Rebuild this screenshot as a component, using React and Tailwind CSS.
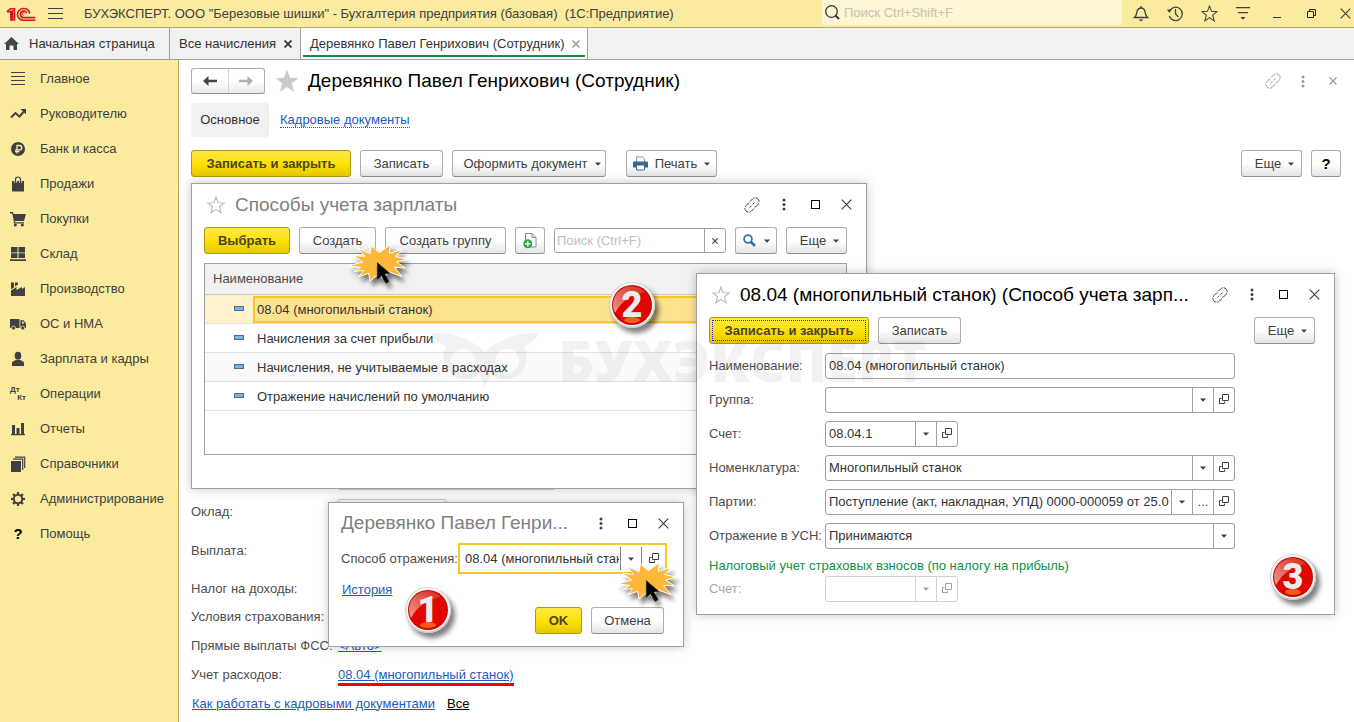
import { clsx } from 'clsx';

const SIDEBAR_ITEMS = [
  { icon: 'menu', label: 'Главное' },
  { icon: 'trend', label: 'Руководителю' },
  { icon: 'ruble', label: 'Банк и касса' },
  { icon: 'bag', label: 'Продажи' },
  { icon: 'cart', label: 'Покупки' },
  { icon: 'boxes', label: 'Склад' },
  { icon: 'factory', label: 'Производство' },
  { icon: 'truck', label: 'ОС и НМА' },
  { icon: 'person', label: 'Зарплата и кадры' },
  { icon: 'dtkt', label: 'Операции' },
  { icon: 'chart', label: 'Отчеты' },
  { icon: 'books', label: 'Справочники' },
  { icon: 'gear', label: 'Администрирование' },
  { icon: 'help', label: 'Помощь' },
];

const METHODS = [
  '08.04 (многопильный станок)',
  'Начисления за счет прибыли',
  'Начисления, не учитываемые в расходах',
  'Отражение начислений по умолчанию',
];

const GEAR_TEETH = [0, 45, 90, 135, 180, 225, 270, 315];

/* Solid 16x16 section icons */
function SectionIcon({ name }) {
  if (name === 'dtkt') {
    return (
      <span aria-hidden="true" className="flex w-4 flex-col text-[8px] leading-[8px] font-bold">
        <span>Дт</span>
        <span className="self-end">Кт</span>
      </span>
    );
  }
  if (name === 'help') {
    return <span aria-hidden="true" className="w-4 text-center text-[15px] font-bold text-black">?</span>;
  }
  return (
    <svg width="16" height="16" viewBox="0 0 16 16" fill="currentColor" aria-hidden="true" className="shrink-0">
      {name === 'menu' && <path d="M1 1h14v1H1zM1 5h14v1H1zM1 9h14v1H1zM1 13h14v1H1z" />}
      {name === 'trend' && (
        <path d="M1 11.5l4.5-4.5 4 3.5 4-4.5" fill="none" stroke="currentColor" strokeWidth="2" />
      )}
      {name === 'trend' && <path d="M10.500 3H16v5.500z" />}
      {name === 'ruble' && (
        <>
          <circle cx="8" cy="8" r="7" />
          <path d="M7 12.500V4.500h2.500a2.200 2.200 0 010 4.400H5M5 10.700h4.500" fill="none" stroke="#faeb9e" strokeWidth="1.300" />
        </>
      )}
      {name === 'bag' && (
        <>
          <path d="M2 5h12v10.500H2z" />
          <path d="M5.500 7V4a2.500 2.500 0 015 0v3" fill="none" stroke="#faeb9e" strokeWidth="2.600" />
          <path d="M5.500 7.500V3.500a2.500 2.500 0 015 0v4" fill="none" stroke="currentColor" strokeWidth="1.200" />
        </>
      )}
      {name === 'cart' && (
        <>
          <path d="M0 1h3l.6 2H16l-2 7H5v1.200h9V12.500H3.800V10L2.200 2.400H0z" />
          <circle cx="5.300" cy="14" r="1.500" />
          <circle cx="12.300" cy="14" r="1.500" />
        </>
      )}
      {name === 'boxes' && <path d="M1 1h6.500v5.500H1zM8.500 1H15v5.500H8.500zM1 7.300h6.500V12H1zM8.500 7.300H15V12H8.500zM0 13.300h16V15H0z" />}
      {name === 'factory' && <path d="M1 15V9.500L6.500 6v3L12 6v2l3-2v9zM1 8.300V1.500h3V6.500zM5 5.500v-4h3v2z" />}
      {name === 'truck' && (
        <>
          <path d="M0 3h9.500v9H0z" />
          <path d="M10.300 4.300h3.200L16 7.500V12h-5.700z" />
          <path d="M12 5.500h1.200L14.500 7.500H12z" fill="#faeb9e" />
          <circle cx="3.500" cy="12" r="2" stroke="#faeb9e" strokeWidth=".8" />
          <circle cx="12.800" cy="12" r="2" stroke="#faeb9e" strokeWidth=".8" />
        </>
      )}
      {name === 'person' && (
        <>
          <ellipse cx="8" cy="4.800" rx="3.300" ry="4" />
          <path d="M2 15v-3c0-1.500 2-2.500 4.300-3h3.400c2.300.5 4.300 1.500 4.300 3v3z" />
        </>
      )}
      {name === 'chart' && <path d="M2 4h3v9H2zM6.500 7h3v6h-3zM11 2h3v11h-3zM1 13h14v1.200H1z" />}
      {name === 'books' && (
        <>
          <path d="M1 5h10v11H1z" />
          <path d="M3 3.200h9.700V14M5 1.200h9.700V12" fill="none" stroke="currentColor" strokeWidth="1.200" />
        </>
      )}
      {name === 'gear' && (
        <>
          <circle cx="8" cy="8" r="4.200" fill="none" stroke="currentColor" strokeWidth="2" />
          {GEAR_TEETH.map((angle) => (
            <rect key={angle} x="6.900" y="1" width="2.200" height="2.800" transform={`rotate(${angle} 8 8)`} />
          ))}
        </>
      )}
    </svg>
  );
}

function Logo() {
  return (
    <svg width="30" height="16" viewBox="18 12 92 48" fill="none" stroke="#d8141f" strokeWidth="5" aria-label="1С">
      <path d="M21 29l11-9h12v37M21 29h12v28M38 24v33" />
      <path d="M91 34a19 18 0 10-19 21h36" />
      <path d="M82 34a10 10 0 10-9 13h35" />
      <path d="M75 34a4 4 0 10-3 6" strokeWidth="3" />
    </svg>
  );
}

function Star({ size = 18, solid = false, className }) {
  return (
    <svg width={size} height={size} viewBox="0 0 18 18" aria-hidden="true" className={className}>
      <path
        d="M9 1l2.100 5.700 6 .3-4.700 3.700L14 16.800 9 13.400l-5 3.400 1.600-6.100L.9 7l6-.3z"
        fill={solid ? 'currentColor' : 'none'}
        stroke="currentColor"
        strokeWidth={solid ? 0.4 : 1.1}
      />
    </svg>
  );
}

function LinkIcon() {
  return (
    <svg width="16" height="16" viewBox="0 0 16 16" fill="none" stroke="currentColor" aria-hidden="true">
      <path d="M6 4.500L8.500 2C10 .5 12.500.3 14 1.900s1.400 4 0 5.400L11.500 10H9.500" strokeDasharray="6 1" />
      <path d="M10 11.500L7.500 14c-1.500 1.500-4 1.700-5.500.1s-1.400-4 0-5.400L4.500 6h2" strokeDasharray="6 1" />
      <path d="M5.500 10.500l1.800-1.800M8.700 7.300l1.800-1.800" />
    </svg>
  );
}

function DotsIcon() {
  return (
    <svg width="4" height="13" viewBox="0 0 4 13" fill="currentColor" aria-hidden="true">
      <circle cx="2" cy="2" r="1.500" />
      <circle cx="2" cy="6.500" r="1.500" />
      <circle cx="2" cy="11" r="1.500" />
    </svg>
  );
}

function CrossIcon({ size = 11, width = 1.2 }) {
  return (
    <svg width={size} height={size} viewBox="0 0 11 11" stroke="currentColor" strokeWidth={width} aria-hidden="true">
      <path d="M.7.7l9.600 9.600M10.300.7L.7 10.300" />
    </svg>
  );
}

function Caret() {
  return (
    <svg width="6" height="4" viewBox="0 0 6 4" fill="currentColor" aria-hidden="true" className="shrink-0">
      <path d="M0 .5h6L3 3.800z" />
    </svg>
  );
}

function OpenIcon() {
  return (
    <svg width="10" height="10" viewBox="0 0 10 10" fill="none" stroke="currentColor" aria-hidden="true" className="mb-[2px] shrink-0">
      <path d="M3.500.5h6v6h-6zM2.500 4.500h-2v5h5v-2" />
    </svg>
  );
}

function Button({ primary, className, children, ...props }) {
  return (
    <button
      type="button"
      className={clsx(
        'flex h-[27px] shrink-0 items-center justify-center rounded-[3px] border bg-linear-to-b',
        primary
          ? 'border-[#a99a12] from-[#ffe940] via-[#ffe100] to-[#e6c900] font-bold text-[#4a4528]'
          : 'border-[#adadad] border-b-[#8f8f8f] from-white via-white to-[#e4e4e4] text-[#404040]',
        className
      )}
      {...props}
    >
      {children}
    </button>
  );
}

/* Text field with a row of small buttons at its right end */
function Field({ id, label, value = '', actions = [], disabled, className }) {
  const icons = { list: <Caret />, open: <OpenIcon />, more: '...' };
  const names = { list: 'Выбрать из списка', open: 'Открыть', more: 'Показать все' };
  return (
    <div className={clsx('flex h-[26px] rounded-[3px] border bg-white', disabled ? 'border-[#d0d0d0] text-[#a0a0a0]' : 'border-[#a0a0a0] text-[#404040]', className)}>
      <input id={id} aria-label={label} defaultValue={value} disabled={disabled} className="mr-[2px] min-w-0 flex-1 pl-[3px] text-[#333] outline-none" />
      {actions.map((action) => (
        <button
          key={action}
          type="button"
          aria-label={names[action]}
          disabled={disabled}
          className={clsx('flex w-[21px] items-center justify-center border-l', disabled ? 'border-[#d0d0d0]' : 'border-[#a0a0a0]')}
        >
          {icons[action]}
        </button>
      ))}
    </div>
  );
}

function WindowControls({ link }) {
  return (
    <div className="flex shrink-0 items-center text-[#404040]">
      {link && <button type="button" aria-label="Ссылка" className="flex w-8 justify-center"><LinkIcon /></button>}
      <button type="button" aria-label="Меню" className="flex w-8 justify-center"><DotsIcon /></button>
      <button type="button" aria-label="Развернуть" className="flex w-[31px] justify-center">
        <span className="size-[9px] border border-black" />
      </button>
      <button type="button" aria-label="Закрыть" className="flex w-[31px] justify-center"><CrossIcon /></button>
    </div>
  );
}

/* Glossy numbered marker */
function Badge({ number, className }) {
  return (
    <div className={clsx('absolute z-30 grid size-[46px] place-items-center rounded-full shadow-[4px_5px_5px_rgba(0,0,0,0.5)]', className)}>
      <svg width="46" height="46" viewBox="0 0 46 46" aria-hidden="true" className="col-start-1 row-start-1">
        <defs>
          <linearGradient id={`gloss-${number}`} x1="0" y1="1" x2="1" y2="0">
            <stop offset="0" stopColor="#f0978a" />
            <stop offset="1" stopColor="#d8281c" />
          </linearGradient>
        </defs>
        <circle cx="23" cy="23" r="23" fill="#c9c9c9" />
        <circle cx="23" cy="22.500" r="22" fill="#f4f4f4" />
        <circle cx="23" cy="23" r="20" fill="#b80d08" />
        <circle cx="23" cy="23" r="19" fill="#e00500" />
        <path d="M6 31A18.500 18.500 0 0136 10C24 12 13 18 6 31z" fill={`url(#gloss-${number})`} />
        <ellipse cx="23" cy="38" rx="8" ry="3" fill="#ff5a1e" />
      </svg>
      <span className="col-start-1 row-start-1 font-[Roboto,sans-serif] text-[36px] leading-[44px] font-black text-[#ececec]">{number}</span>
    </div>
  );
}

function ClickBurst({ className }) {
  return (
    <svg width="62" height="48" viewBox="0 0 186 144" aria-hidden="true" className={clsx('pointer-events-none absolute z-20 drop-shadow-[3px_5px_2px_rgba(0,0,0,0.5)]', className)}>
      <path
        d="M2 72L44 60 16 40 50 43 30 19 66 35 70 11 94 32 127 8 124 34 164 22 142 43 178 52 146 60 172 78 140 76 162 104 124 90 104 110 92 96 66 117 62 94 32 104 46 86 18 88 38 76Z"
        fill="#fdb839"
        stroke="#fff"
        strokeWidth="3"
      />
      <path d="M88 62v50l12-11 14 23 9-5-13-23 15-2z" fill="#000" stroke="#222" strokeWidth="2" />
    </svg>
  );
}

function TopBar() {
  return (
    <header className="flex h-7 items-center border-b border-[#b9aa58] bg-[#faeb9e] text-[#404040]">
      <div className="flex w-12 pl-[6px]"><Logo /></div>
      <button type="button" aria-label="Главное меню" className="flex h-[11px] w-[15px] flex-col justify-between">
        <span className="h-px w-full bg-[#404040]" />
        <span className="h-px w-full bg-[#404040]" />
        <span className="h-px w-full bg-[#404040]" />
      </button>
      <h1 className="ml-[21px] flex-1 truncate whitespace-pre">БУХЭКСПЕРТ. ООО "Березовые шишки" - Бухгалтерия предприятия (базовая)  (1С:Предприятие)</h1>
      <label className="flex h-[25px] w-[300px] shrink-0 items-center self-start rounded-b-[3px] bg-[#fdf5d3] pl-[3px]">
        <svg width="15" height="15" viewBox="0 0 15 15" fill="none" stroke="#333" aria-hidden="true">
          <circle cx="6.500" cy="6.500" r="5.800" strokeWidth="1.300" />
          <path d="M10.500 10.500l3.500 3.500" strokeWidth="2" />
        </svg>
        <input aria-label="Поиск" placeholder="Поиск Ctrl+Shift+F" className="ml-1 min-w-0 flex-1 outline-none placeholder:text-[#c6c2b8]" />
      </label>
      <div className="ml-[2px] flex shrink-0 items-center">
        <button type="button" aria-label="Уведомления" className="flex w-[34px] justify-center">
          <svg width="16" height="17" viewBox="0 0 16 17" fill="none" stroke="currentColor" strokeWidth="1.300">
            <path d="M1.500 12.500C4 10.500 3.500 8 4.300 5.500 5 3.500 6.300 3 8 3s3 .5 3.700 2.500c.8 2.500.3 5 2.800 7zM8 3V1" />
            <path d="M5.500 14.500h5L8 16.500z" fill="currentColor" stroke="none" />
          </svg>
        </button>
        <button type="button" aria-label="История" className="flex w-[34px] justify-center">
          <svg width="17" height="17" viewBox="0 0 17 17" fill="none" stroke="currentColor" strokeWidth="1.300">
            <path d="M2.500 6A6.700 6.700 0 112.200 11M8.500 4v5l3 3" />
            <path d="M0 4.500h5L2.300 8z" fill="currentColor" stroke="none" />
          </svg>
        </button>
        <button type="button" aria-label="Избранное" className="flex w-[34px] justify-center"><Star size={17} /></button>
        <button type="button" aria-label="Настройки" className="flex w-[34px] justify-center">
          <svg width="14" height="13" viewBox="0 0 14 13" fill="currentColor">
            <path d="M0 0h14v1.300H0zM2 5h10v1.300H2zM4.500 10h5L7 12.700z" />
          </svg>
        </button>
        <button type="button" aria-label="Свернуть" className="flex w-[34px] justify-center">
          <span className="mt-2 h-px w-2 bg-[#333]" />
        </button>
        <button type="button" aria-label="Восстановить" className="flex w-[34px] justify-center">
          <svg width="9" height="9" viewBox="0 0 9 9" fill="none" stroke="#222">
            <path d="M.5 2.500h6v6h-6zM2.500 2.500v-2h6v6h-2" />
          </svg>
        </button>
        <button type="button" aria-label="Закрыть" className="flex w-[26px] justify-center pl-2"><CrossIcon /></button>
      </div>
    </header>
  );
}

function TabBar() {
  return (
    <nav className="flex h-8 border-b border-[#a0a0a0] bg-[#f1f1f1] text-[#333]">
      <a href="#home" className="flex w-[170px] items-center gap-[10px] border-r border-[#a0a0a0] pl-1">
        <svg width="15" height="13" viewBox="0 0 15 13" fill="#444" aria-hidden="true">
          <path d="M7.500 0L15 7h-2v6H9.500V8.500h-4V13H2V7H0z" />
        </svg>
        Начальная страница
      </a>
      <div className="flex w-[131px] items-center justify-between border-r border-[#a0a0a0] pr-2 pl-[9px]">
        <a href="#accruals">Все начисления</a>
        <button type="button" aria-label="Закрыть вкладку" className="text-[#333]"><CrossIcon size={8} width={2.4} /></button>
      </div>
      <div className="flex w-[287px] border-r border-[#a0a0a0] bg-white px-[2px]">
        <div className="mb-[2px] flex flex-1 items-center justify-between border-b-2 border-[#109048] pt-1 pr-[5px] pl-[7px]">
          <a href="#employee" className="whitespace-nowrap">Деревянко Павел Генрихович (Сотрудник)</a>
          <button type="button" aria-label="Закрыть вкладку" className="text-[#888]"><CrossIcon size={8} width={1.6} /></button>
        </div>
      </div>
    </nav>
  );
}

function Sidebar() {
  return (
    <aside className="w-[179px] shrink-0 border-r border-[#b9aa58] bg-[#faeb9e] pt-px">
      {SIDEBAR_ITEMS.map((item) => (
        <a key={item.label} href={`#${item.icon}`} className="flex h-[35px] items-center gap-[14px] pl-[10px] text-[#404040]">
          <SectionIcon name={item.icon} />
          {item.label}
        </a>
      ))}
    </aside>
  );
}

function EmployeeForm() {
  return (
    <section className="pr-[13px] pl-3">
      <div className="flex items-center pt-2">
        <div className="flex h-[26px] w-[74px] rounded-[3px] border border-[#adadad] border-b-[#8f8f8f] bg-linear-to-b from-white via-white to-[#e8e8e8]">
          <button type="button" aria-label="Назад" className="flex flex-1 items-center justify-center border-r border-[#d0d0d0] text-[#444]">
            <svg width="14" height="10" viewBox="0 0 14 10" fill="currentColor"><path d="M0 5l5.500-5v3.800H14v2.400H5.500V10z" /></svg>
          </button>
          <button type="button" aria-label="Вперед" className="flex flex-1 items-center justify-center text-[#b0b0b0]">
            <svg width="14" height="10" viewBox="0 0 14 10" fill="currentColor"><path d="M14 5L8.500 0v3.800H0v2.400h8.500V10z" /></svg>
          </button>
        </div>
        <Star size={24} solid className="ml-[10px] text-[#cbcbcb]" />
        <h2 className="ml-[9px] flex-1 text-[19px] leading-[26px] text-black">Деревянко Павел Генрихович (Сотрудник)</h2>
        <div className="-mr-[7px] flex items-center text-[#999]">
          <button type="button" aria-label="Ссылка" className="flex w-[30px] justify-center"><LinkIcon /></button>
          <button type="button" aria-label="Меню" className="flex w-[30px] justify-center"><DotsIcon /></button>
          <button type="button" aria-label="Закрыть" className="flex w-[30px] justify-center"><CrossIcon size={8} width={1.5} /></button>
        </div>
      </div>

      <nav className="mt-[9px] flex h-[34px] items-center">
        <a href="#main" className="flex h-full w-[78px] items-center justify-center rounded-[4px] bg-[#f1f1f1] text-[#333]">Основное</a>
        <a href="#hr" className="ml-[11px] border-b border-dotted border-[#2459bf] leading-[14px] text-[#2459bf]">Кадровые документы</a>
      </nav>

      <div className="mt-[13px] flex items-center">
        <Button primary className="w-[160px]">Записать и закрыть</Button>
        <Button className="ml-[9px] w-[83px]">Записать</Button>
        <Button className="ml-[9px] w-[154px] gap-[7px] pl-[6px]">Оформить документ <Caret /></Button>
        <Button className="ml-5 w-[91px] gap-[7px]">
          <svg width="15" height="15" viewBox="0 0 15 15" aria-hidden="true">
            <path d="M3.500 6V1h6l2 2v3" fill="#fff" stroke="#7d97b0" />
            <path d="M1 5.500h13q1 0 1 1v5h-3V9H3v2.500H0v-5q0-1 1-1z" fill="#3c6690" />
            <path d="M3.500 9h8v5h-8z" fill="#fff" stroke="#3c6690" />
          </svg>
          Печать <Caret />
        </Button>
        <Button className="ml-auto w-[61px] gap-[7px] pl-[6px]">Еще <Caret /></Button>
        <Button className="ml-[9px] w-[30px] text-[15px] font-bold text-black">?</Button>
      </div>

      <div className="mt-[287px] text-[#4d4d4d]">
        <div className="flex h-[35px] items-start pl-[146px]">
          <input aria-label="Назначение" className="h-[26px] w-[219px] rounded-[3px] border border-[#d0d0d0]" />
        </div>
        <div className="flex h-[26px] items-center">
          <label htmlFor="salary" className="w-[146px]">Оклад:</label>
          <input id="salary" className="h-[26px] w-[110px] rounded-[3px] border border-[#d0d0d0]" />
        </div>
        <div className="flex h-[51px] items-center">Выплата:</div>
        <div className="flex h-[26px] items-center">Налог на доходы:</div>
        <div className="flex h-[29px] items-center">Условия страхования:</div>
        <div className="flex h-[29px] items-center">
          <span className="w-[147px]">Прямые выплаты ФСС:</span>
          <a href="#fss" className="text-[#2459bf] underline">&lt;Авто&gt;</a>
        </div>
        <div className="flex h-[29px] items-center">
          <span className="w-[147px]">Учет расходов:</span>
          <a href="#costs" className="relative text-[#2459bf] underline">
            08.04 (многопильный станок)
            <span className="absolute inset-x-0 top-full h-[3px] bg-[#f00010]" />
          </a>
        </div>
        <div className="flex h-[29px] items-center gap-3 pl-px">
          <a href="#howto" className="text-[#2459bf] underline">Как работать с кадровыми документами</a>
          <a href="#all" className="text-black underline">Все</a>
        </div>
      </div>
    </section>
  );
}

function MethodListWindow() {
  return (
    <section className="absolute top-[123px] left-3 w-[676px] border border-[#a0a0a0] bg-white px-3 pb-[33px] shadow-[0_0_10px_rgba(0,0,0,0.22)]">
      <div className="mb-[2px] flex h-[41px] items-center">
        <Star className="ml-[3px] text-[#b5b9be]" />
        <h2 className="ml-[10px] flex-1 text-[19px] leading-6 text-[#808080]">Способы учета зарплаты</h2>
        <div className="-mr-2"><WindowControls link /></div>
      </div>
      <div className="flex items-center pr-[7px]">
        <Button primary className="w-[86px]">Выбрать</Button>
        <Button className="ml-[9px] w-[77px]">Создать</Button>
        <Button className="ml-[9px] w-[121px]">Создать группу</Button>
        <Button className="ml-[9px] w-[30px]" aria-label="Скопировать">
          <svg width="14" height="16" viewBox="0 0 14 16" aria-hidden="true">
            <path d="M2.500.5h6.500l4 4v9.500H2.500z" fill="#fff" stroke="#7d8b9b" />
            <path d="M9 .5v4h4" fill="none" stroke="#7d8b9b" />
            <circle cx="4.800" cy="10.700" r="4.500" fill="#2fa147" />
            <path d="M4.800 8v5.400M2.100 10.700h5.400" stroke="#fff" strokeWidth="1.400" />
          </svg>
        </Button>
        <div className="ml-[9px] flex h-[25px] min-w-0 flex-1 rounded-[3px] border border-[#a0a0a0]">
          <input aria-label="Поиск" placeholder="Поиск (Ctrl+F)" className="min-w-0 flex-1 pl-[2px] outline-none placeholder:text-[#bdbdbd]" />
          <button type="button" aria-label="Очистить" className="flex w-[21px] items-center justify-center border-l border-[#a0a0a0] text-[#404040]">
            <CrossIcon size={6} width={2} />
          </button>
        </div>
        <Button className="ml-[9px] w-[42px] gap-[8px]" aria-label="Найти">
          <svg width="13" height="13" viewBox="0 0 13 13" fill="none" stroke="#2f75ad" aria-hidden="true">
            <circle cx="5" cy="5" r="3.900" strokeWidth="1.800" />
            <path d="M8 8l4 4" strokeWidth="2.600" />
          </svg>
          <Caret />
        </Button>
        <Button className="ml-[9px] w-[61px] gap-[7px] pl-[6px]">Еще <Caret /></Button>
      </div>

      <div className="mt-[9px] mr-[7px] h-[192px] border border-[#a0a0a0]">
        <table className="w-full border-separate border-spacing-0 text-left text-[#333]">
          <thead>
            <tr className="h-[31px] bg-[#f1f1f1] text-[#4d4d4d]">
              <th colSpan={2} className="border-b border-[#c8c8c8] p-0 pl-2 font-normal">Наименование</th>
            </tr>
          </thead>
          <tbody>
            {METHODS.map((method, i) => (
              <tr key={method} className={clsx('h-[29px]', i === 0 && 'bg-[#fef2cd]', i === 2 && 'bg-[#fafafa]')}>
                <td className="w-12 border-b border-[#e2e2e2] p-0 pl-[29px]">
                  <span className="mb-[2px] block h-[5px] w-[10px] border border-[#4a708f] bg-[#7fb3dc]" />
                </td>
                <td className="border-b border-[#e2e2e2] p-0">
                  <div className={clsx('flex h-[27px] items-center border-2 pt-[2px] pl-[2px]', i === 0 ? 'border-[#f9c923] bg-[#fee38f]' : 'border-transparent')}>
                    {method}
                  </div>
                </td>
              </tr>
            ))}
          </tbody>
        </table>
      </div>
      <ClickBurst className="top-[58px] left-[156px]" />
      <Badge number={2} className="top-[98px] left-[417px]" />
    </section>
  );
}

function ReflectionWindow() {
  return (
    <section className="absolute top-[442px] left-[149px] w-[356px] border border-[#a0a0a0] bg-white pr-4 pb-3 pl-3 shadow-[0_0_10px_rgba(0,0,0,0.22)]">
      <div className="flex h-10 items-center">
        <h2 className="flex-1 text-[19px] leading-6 whitespace-nowrap text-[#808080]">Деревянко Павел Генри...</h2>
        <div className="-mr-3"><WindowControls /></div>
      </div>
      <div className="flex items-center">
        <label htmlFor="method" className="w-[117px] shrink-0 whitespace-nowrap text-[#4d4d4d]">Способ отражения:</label>
        <div className="flex h-[31px] min-w-0 flex-1 border-2 border-[#f9c923] py-[2px] text-[#404040]">
          <input id="method" defaultValue="08.04 (многопильный станок)" className="mr-px ml-[5px] min-w-0 flex-1 text-[#333] outline-none" />
          <button type="button" aria-label="Выбрать из списка" className="flex w-[21px] items-center justify-center border-l border-[#808080]"><Caret /></button>
          <button type="button" aria-label="Открыть" className="flex w-6 items-center justify-center border-l border-[#808080]"><OpenIcon /></button>
        </div>
      </div>
      <a href="#history" className="mt-2 ml-px inline-block text-[#2459bf] underline">История</a>
      <div className="mt-[9px] flex justify-end gap-[9px] pr-[3px]">
        <Button primary className="w-[47px]">OK</Button>
        <Button className="w-[73px]">Отмена</Button>
      </div>
      <ClickBurst className="top-[57px] left-[288px]" />
      <Badge number={1} className="top-[84px] left-[76px]" />
    </section>
  );
}

function FormRow({ id, label, children }) {
  return (
    <div className="flex items-center">
      <label htmlFor={id} className="w-[116px] shrink-0 whitespace-nowrap text-[#4d4d4d]">{label}</label>
      {children}
    </div>
  );
}

function MethodWindow() {
  return (
    <section className="absolute top-[213px] left-[517px] w-[639px] border border-[#a0a0a0] bg-white px-3 pb-3 shadow-[0_0_10px_rgba(0,0,0,0.22)]">
      <div className="mb-[2px] flex h-[41px] items-center">
        <Star className="ml-[3px] shrink-0 text-[#b5b9be]" />
        <h2 className="ml-[10px] flex-1 text-[19px] leading-6 whitespace-nowrap text-black">08.04 (многопильный станок) (Способ учета зарп...</h2>
        <div className="-mr-2"><WindowControls link /></div>
      </div>
      <div className="flex items-center">
        <Button primary className="w-[160px] outline-1 -outline-offset-4 outline-dotted outline-[#2030c0]">Записать и закрыть</Button>
        <Button className="ml-[9px] w-[83px]">Записать</Button>
        <Button className="mr-[7px] ml-auto w-[61px] gap-[7px] pl-[6px]">Еще <Caret /></Button>
      </div>
      <div className="mt-[9px] flex flex-col gap-2 pr-[87px]">
        <FormRow id="name" label="Наименование:">
          <Field id="name" value="08.04 (многопильный станок)" className="flex-1" />
        </FormRow>
        <FormRow id="group" label="Группа:">
          <Field id="group" actions={['list', 'open']} className="flex-1" />
        </FormRow>
        <FormRow id="account" label="Счет:">
          <Field id="account" value="08.04.1" actions={['list', 'open']} className="w-[133px]" />
        </FormRow>
        <FormRow id="item" label="Номенклатура:">
          <Field id="item" value="Многопильный станок" actions={['list', 'open']} className="flex-1" />
        </FormRow>
        <FormRow id="batch" label="Партии:">
          <Field id="batch" value="Поступление (акт, накладная, УПД) 0000-000059 от 25.05.2021" actions={['list', 'more', 'open']} className="flex-1" />
        </FormRow>
        <FormRow id="usn" label="Отражение в УСН:">
          <div className="grid h-[26px] flex-1 grid-cols-[1fr_21px] rounded-[3px] border border-[#a0a0a0]">
            <select id="usn" className="col-span-2 col-start-1 row-start-1 appearance-none pl-[3px] text-[#333] outline-none">
              <option>Принимаются</option>
            </select>
            <span className="pointer-events-none col-start-2 row-start-1 flex items-center justify-center border-l border-[#a0a0a0] text-[#404040]"><Caret /></span>
          </div>
        </FormRow>
      </div>
      <h3 className="mt-[7px] leading-5 text-[#109048]">Налоговый учет страховых взносов (по налогу на прибыль)</h3>
      <div className="flex items-center">
        <label htmlFor="tax-account" className="w-[116px] text-[#a8a8a8]">Счет:</label>
        <Field id="tax-account" actions={['list', 'open']} disabled className="w-[133px]" />
      </div>
      <Badge number={3} className="top-[280px] left-[573px]" />
    </section>
  );
}

/* Brand mark laid over the windows */
function Watermark() {
  return (
    <div aria-hidden="true" className="pointer-events-none absolute top-[272px] left-[250px] z-10 flex items-center gap-[17px] text-[#5a5a78] opacity-[0.07]">
      <svg width="112" height="56" viewBox="0 0 112 56" fill="none" stroke="currentColor">
        <path
          d="M1 1c14 0 30 1 40 9a22 22 0 0115 11 22 22 0 0115-11c10-8 26-9 40-9-6 8-10 11-16 13a22 22 0 01-33 28l-6 13-6-13a22 22 0 01-33-28C11 12 7 9 1 1zM34 17a12 12 0 100 24 12 12 0 000-24zM78 17a12 12 0 100 24 12 12 0 000-24z"
          fill="currentColor"
          fillRule="evenodd"
          stroke="none"
        />
      </svg>
      <span className="font-['Open_Sans',sans-serif] text-[56px] leading-[56px] font-extrabold">БУХЭКСПЕРТ</span>
    </div>
  );
}

export default function App() {
  return (
    <div className="flex min-h-screen flex-col overflow-hidden bg-white font-['Liberation_Sans',Arial,sans-serif] text-[13px] leading-4">
      <TopBar />
      <TabBar />
      <div className="flex flex-1">
        <Sidebar />
        <main className="relative min-w-0 flex-1">
          <EmployeeForm />
          <MethodListWindow />
          <ReflectionWindow />
          <MethodWindow />
          <Watermark />
        </main>
      </div>
    </div>
  );
}
